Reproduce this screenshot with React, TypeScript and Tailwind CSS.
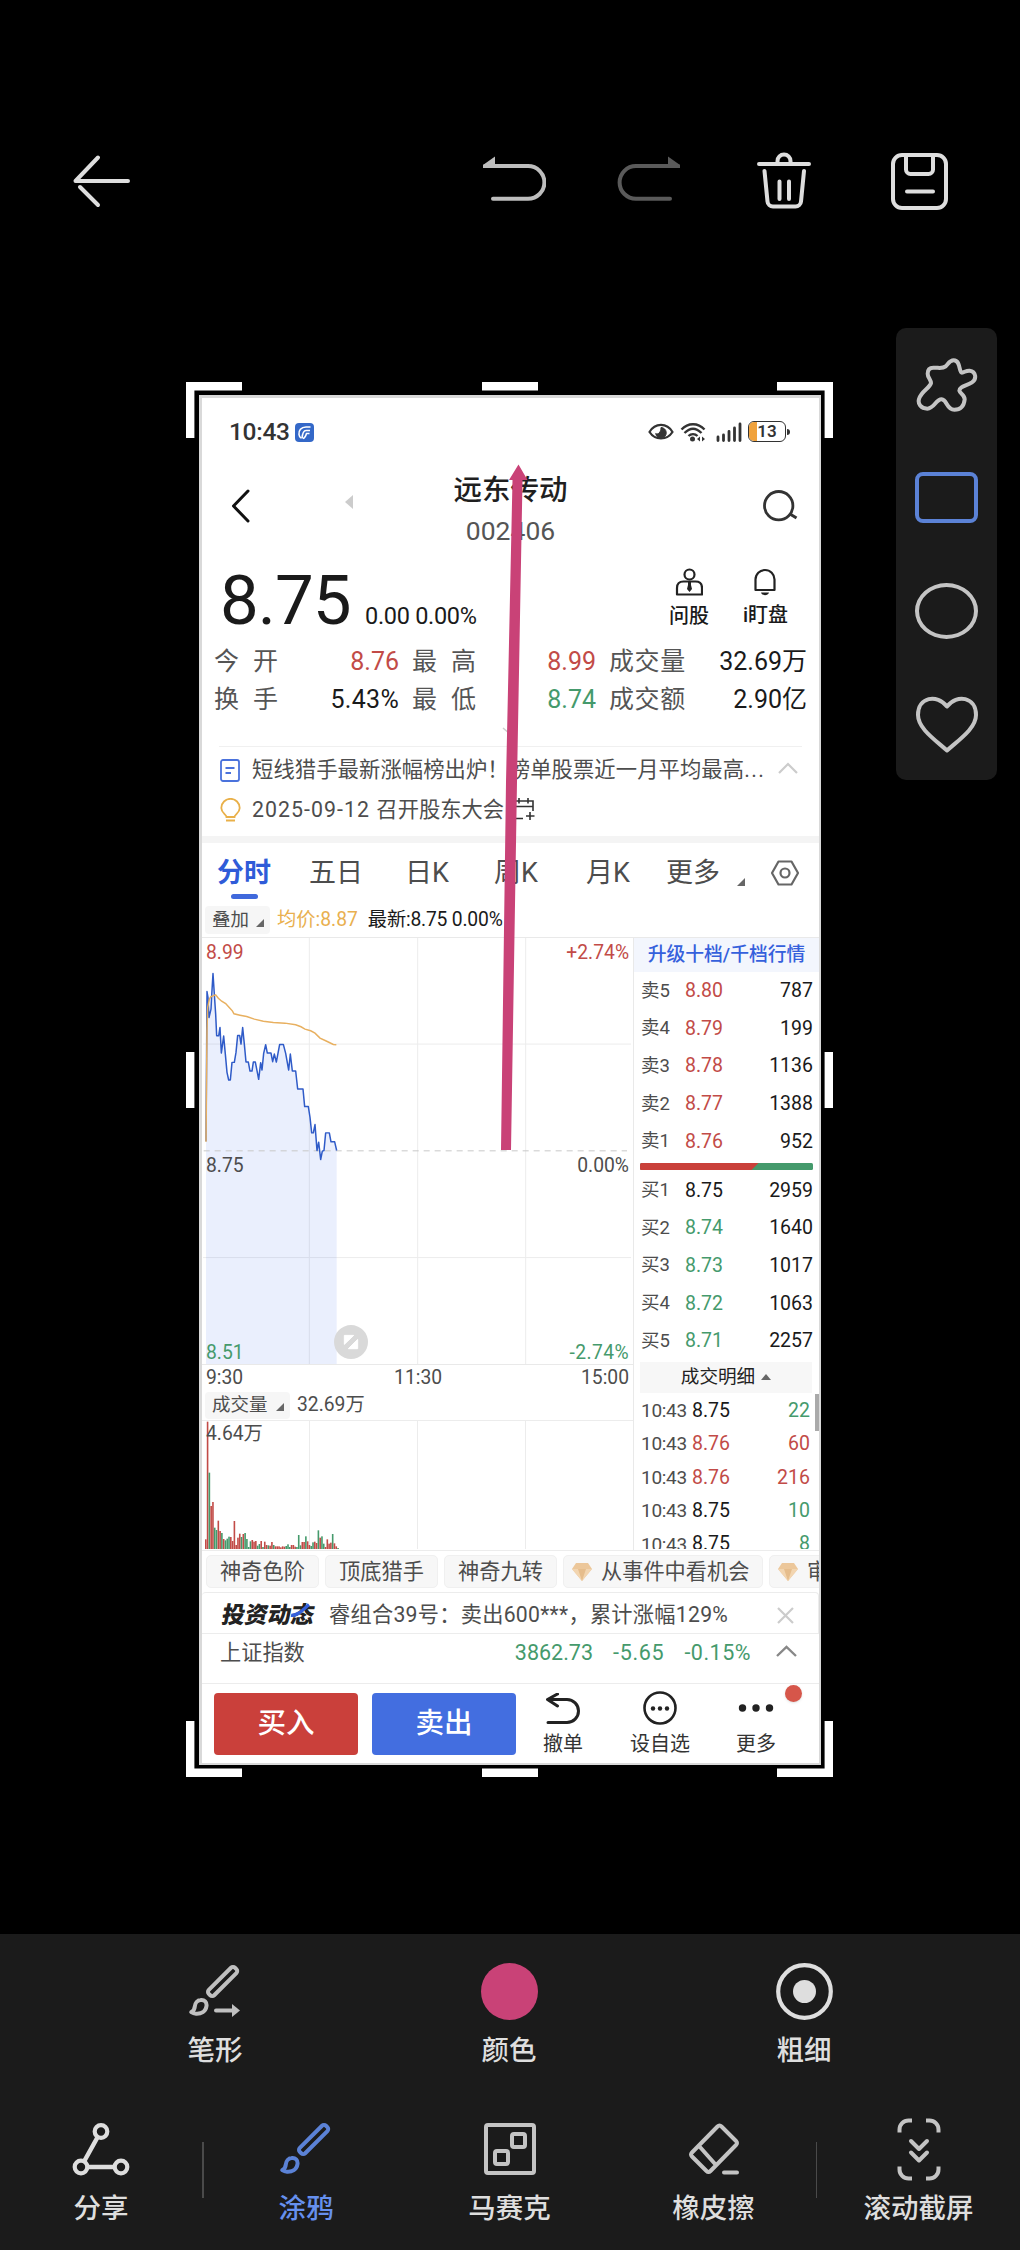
import type { ReactNode } from "react";

const sells = [
  ["卖5", "8.80", "787"],
  ["卖4", "8.79", "199"],
  ["卖3", "8.78", "1136"],
  ["卖2", "8.77", "1388"],
  ["卖1", "8.76", "952"],
];

const buys = [
  ["买1", "8.75", "2959"],
  ["买2", "8.74", "1640"],
  ["买3", "8.73", "1017"],
  ["买4", "8.72", "1063"],
  ["买5", "8.71", "2257"],
];

const trades = [
  { price: "8.75", qty: "22", up: false },
  { price: "8.76", qty: "60", up: true },
  { price: "8.76", qty: "216", up: true },
  { price: "8.75", qty: "10", up: false },
  { price: "8.75", qty: "8", up: false },
];

const priceLine =
  "33,632 36,182 39,200 42,260 48,235 50,195 54,128 58,190 62,250 65,315 71,315 75,290 79,367 86,316 91,370 96,425 101,448 106,448 111,395 118,395 123,365 128,314 134,314 138,340 143,290 148,340 153,394 160,394 165,421 171,421 175,394 181,394 186,420 191,446 197,396 201,418 206,368 212,342 217,367 228,367 233,393 238,370 244,394 254,341 265,341 272,368 281,418 286,370 292,421 302,421 308,475 324,475 329,528 340,528 345,560 350,607 355,607 360,582 366,660 371,635 377,687 382,662 387,660 392,607 403,607 408,634 419,634 425,660";

const avgLine =
  "33,634 36,300 38,230 43,205 47,198 62,192 70,202 80,211 92,218 102,229 112,240 117,249 135,253 155,257 178,265 205,271 235,275 270,277 302,282 318,288 330,295 347,300 360,307 375,322 392,330 415,341 424,342";

// one entry per minute: height in thirds of a pixel, negative = green
const volumes = [
  29, 382, -229, 129, 141, -64, -57, 85, 54, -48, 30, -26, -31, -37, 36, 24, 84, 12, 34, 46, -36, 45,
  -48, -30, -6, -23, 27, 22, 24, -10, -15, 24, -6, 22, 12, -11, 10, 21, -12, 8, 8, 8, 5, 8, 7, -9, -14,
  -6, 12, 12, 7, -6, -42, -11, 21, 21, -38, 23, 12, -9, -20, 22, 18, -56, 34, -38, -16, 6, 29, 16, 19,
  -45, 17, 8, -3,
];

function Svg({ w, h, box, className = "", children }: { w: number; h: number; box?: string; className?: string; children: ReactNode }) {
  return (
    <svg width={w} height={h} viewBox={box ?? `0 0 ${w} ${h}`} fill="none" className={`shrink-0 ${className}`}>
      {children}
    </svg>
  );
}

function Corner() {
  return (
    <Svg w={8} h={8}>
      <path d="M8 0V8H0Z" fill="#666" />
    </Svg>
  );
}

function Brush({ arrow = false }: { arrow?: boolean }) {
  return (
    <Svg w={52} h={54}>
      <rect x="-18.5" y="-3.8" width="37" height="7.6" rx="2.8" transform="translate(33.6 17.5) rotate(-45)" stroke="currentColor" strokeWidth="4" />
      <path
        d="M11.5 36c4-.5 6.500 2 6 6-.7 5.500-5.500 8-10.500 7.700-2-.1-3.500-.7-4.700-1.500 2.700-1.200 3.200-2.700 3.500-5.700.3-3.500 2.700-6.200 5.700-6.500z"
        stroke="currentColor"
        strokeWidth="4"
        strokeLinejoin="round"
      />
      {arrow && (
        <>
          <path d="M27 46.500H43" stroke="currentColor" strokeWidth="4" strokeLinecap="round" />
          <path d="M43 40L51 46.500L43 53Z" fill="currentColor" />
        </>
      )}
    </Svg>
  );
}

function TopBar() {
  return (
    <header className="flex h-[328px] items-start pt-[149px] pl-[71px] text-[#dedede]">
      <Svg w={60} h={60}>
        <path d="M57 32H4.500L27 8.500M9 38L27 56" stroke="currentColor" strokeWidth="4" strokeLinecap="round" strokeLinejoin="round" />
      </Svg>
      <Svg w={64} h={60} className="ml-[351px] text-[#bdbdbd]">
        <path d="M3 17H46a16.400 16.400 0 0 1 0 32.800H11" stroke="currentColor" strokeWidth="4" strokeLinecap="round" />
        <path d="M1 19V16L13 7.500V19Z" fill="currentColor" />
      </Svg>
      <Svg w={64} h={60} className="ml-[71px] text-[#5a5a5a]">
        <path d="M61 17H19a16.400 16.400 0 0 0 0 32.800H53" stroke="currentColor" strokeWidth="4" strokeLinecap="round" />
        <path d="M63 19V16L51 7.500V19Z" fill="currentColor" />
      </Svg>
      <Svg w={56} h={62} className="ml-[75px]">
        <path d="M3 15H53M21.500 15V12a6.500 6.500 0 0 1 13 0V15M8.500 22L11.500 52.500a5.500 5.500 0 0 0 5.500 5H39.500a5.500 5.500 0 0 0 5.500-5L48 22M23.500 32.500V50M33 32.500V50" stroke="currentColor" strokeWidth="4" strokeLinecap="round" />
      </Svg>
      <Svg w={58} h={58} className="ml-[78px] mt-[3px]">
        <rect x="3" y="3" width="53" height="53" rx="9" stroke="currentColor" strokeWidth="4" />
        <path d="M16 4V17.500a4.500 4.500 0 0 0 4.500 4.500H38.500a4.500 4.500 0 0 0 4.500-4.500V4M17 39.500H43" stroke="currentColor" strokeWidth="4" strokeLinecap="round" />
      </Svg>
    </header>
  );
}

function StatusBar() {
  return (
    <div className="flex h-[69px] items-center pl-[27px] pr-[29px] text-[#333]">
      <span className="w-[61px] text-[24.5px] font-medium tracking-[-0.3px]">10:43</span>
      <Svg w={19} h={19} className="ml-[5px]">
        <rect width="19" height="19" rx="4" fill="#3468c8" />
        <path d="M15.500 4H11C6 4 3.500 7.500 4 11.500c.2 1.700 1 3 2 3.500M15 7.500H11C8.500 7.500 7.500 9.500 7 15.500M14.500 10.500H11.500C10.500 14 10 15 8 15.500" stroke="#fff" strokeWidth="1.600" />
      </Svg>
      <div className="ml-auto flex items-center">
        <Svg w={26} h={20} className="mt-[-2px]">
          <path d="M1.500 10C7 .5 19 .5 24.500 10C19 18.500 7 18.500 1.500 10Z" stroke="#333" strokeWidth="2.200" />
          <path d="M13 5.500a5.300 5.300 0 1 1-5.300 6c2 1.500 5.500-1 5.300-6z" fill="#333" stroke="#333" />
        </Svg>
        <Svg w={26} h={20} className="ml-[6px] mt-[-2px]">
          <path d="M1.500 7.500C8 .5 18 .5 24.500 7.500M4.500 11C10 5.500 16 5.500 21.500 11M8.500 14C11 11.500 15 11.500 17.500 14" stroke="#333" strokeWidth="2.400" />
          <circle cx="12.500" cy="17" r="2.500" fill="#333" />
          <path d="M17 17L20 14.500V19.500ZM25 17L22 14.500V19.500Z" fill="#333" />
        </Svg>
        <Svg w={26} h={20} className="ml-[10px] mt-[-2px]">
          <path d="M2 15V18.500M7.500 13V18.500M13 9.500V18.500M18.500 6V18.500M24 2V18.500" stroke="#333" strokeWidth="2.800" strokeLinecap="round" />
        </Svg>
        <div className="relative ml-[6px] mt-[-2px] h-[21px] w-[38px] overflow-hidden rounded-[6px] border-[1.5px] border-[#333] text-center text-[17px] font-semibold leading-[19px]">
          <span className="absolute inset-y-0 left-0 w-[8px] bg-[#f0a23c]" />
          <span className="relative">13</span>
        </div>
        <span className="ml-px mt-[-2px] h-[6px] w-[3px] rounded-r-full bg-[#333]" />
      </div>
    </div>
  );
}

function StockHeader() {
  return (
    <div className="flex h-[86px] items-start">
      <Svg w={22} h={38} className="ml-[28px] mt-[20px]">
        <path d="M18 4L3.500 19L18 34" stroke="#111" strokeWidth="3" strokeLinecap="round" strokeLinejoin="round" />
      </Svg>
      <Svg w={8} h={14} className="ml-[93px] mt-[28px]">
        <path d="M8 0V14L0 7Z" fill="#ccc" />
      </Svg>
      <div className="ml-[100px] w-[115px] pt-[2px] text-center">
        <h1 className="whitespace-nowrap text-[28.5px] font-medium leading-[44px] text-[#1f1f1f]">远东传动</h1>
        <p className="text-[26.5px] leading-[36px] text-[#555]">002406</p>
      </div>
      <Svg w={36} h={34} className="ml-[194px] mt-[23px]">
        <circle cx="16.700" cy="15.700" r="14.200" stroke="#333" strokeWidth="2.800" />
        <path d="M28 24L34.500 28" stroke="#333" strokeWidth="3" />
      </Svg>
    </div>
  );
}

function PriceRow() {
  return (
    <div className="flex h-[89px] items-start text-[#1a1a1a]">
      <span className="ml-[18px] mt-[13px] w-[132px] text-[69px] leading-[70px] tracking-[-1px]">8.75</span>
      <span className="ml-[13px] mt-[51px] whitespace-nowrap text-[23.5px] leading-[24px] tracking-[-0.3px]">0.00 0.00%</span>
      <div className="ml-auto mr-[31px] flex gap-[34px] text-[20px] font-medium leading-[22px]">
        <div className="flex flex-col items-center pt-[15px]">
          <Svg w={28} h={28}>
            <circle cx="14.500" cy="6.500" r="5" stroke="#222" strokeWidth="2.200" />
            <path d="M2 26.500V20c0-4 2.500-6.500 6.500-6.500H20.500c4 0 6.500 2.500 6.500 6.500V26.500Z" stroke="#222" strokeWidth="2.200" strokeLinejoin="round" />
            <path d="M13 14h3v3l1 4-2.500 3-2.500-3 1-4z" fill="#222" />
          </Svg>
          <span className="mt-[9px]">问股</span>
        </div>
        <div className="flex flex-col items-center pt-[15px]">
          <Svg w={24} h={28}>
            <path d="M2.500 22V11.500a9.500 9.500 0 0 1 19 0V22Z" stroke="#222" strokeWidth="2.200" strokeLinejoin="round" />
            <path d="M8 24.500H16C15 28 9 28 8 24.500Z" fill="#222" />
          </Svg>
          <span className="mt-[8px]">i盯盘</span>
        </div>
      </div>
    </div>
  );
}

function Stats() {
  return (
    <div className="pl-[12px] pr-[12px] pt-px text-[25px] leading-[38px] text-[#1a1a1a]">
      <div className="flex h-[38px] whitespace-nowrap">
        <span className="w-[64px] tracking-[14px] text-[#555]">今开</span>
        <span className="w-[121px] text-right text-[#c24b47]">8.76</span>
        <span className="ml-[13px] w-[78px] tracking-[14px] text-[#555]">最高</span>
        <span className="w-[106px] text-right text-[#c24b47]">8.99</span>
        <span className="ml-[13px] tracking-[0.6px] text-[#555]">成交量</span>
        <span className="ml-auto">32.69万</span>
      </div>
      <div className="flex h-[38px] whitespace-nowrap">
        <span className="w-[64px] tracking-[14px] text-[#555]">换手</span>
        <span className="w-[121px] text-right tracking-[0.3px]">5.43%</span>
        <span className="ml-[13px] w-[78px] tracking-[14px] text-[#555]">最低</span>
        <span className="w-[106px] text-right text-[#459a6c]">8.74</span>
        <span className="ml-[13px] tracking-[0.6px] text-[#555]">成交额</span>
        <span className="ml-auto">2.90亿</span>
      </div>
      <div className="flex h-[27px] items-center justify-center pr-[2px] pb-[3px]">
        <Svg w={16} h={8}>
          <path d="M1 1L8 7L15 1" stroke="#ccc" strokeWidth="1.500" />
        </Svg>
      </div>
    </div>
  );
}

function News() {
  return (
    <div className="h-[90px] text-[21.3px] text-[#4d4d4d]">
      <div className="mx-[17px] h-px bg-[#f0f0f0]" />
      <div className="mt-[3px] flex h-[40px] items-center pl-[18px] pr-[21px]">
        <Svg w={20} h={23}>
          <rect x="1" y="1" width="18" height="21" rx="2" stroke="#4a72dc" strokeWidth="1.800" />
          <path d="M5.500 9H14.500M5.500 14H11" stroke="#4a72dc" strokeWidth="1.800" />
        </Svg>
        <span className="ml-[12px] whitespace-nowrap tracking-[0.1px]">
          短线猎手最新涨幅榜出炉！榜单股票近一月平均最高<span className="tracking-[1.4px]">...</span>
        </span>
        <Svg w={20} h={12} className="ml-auto mt-[-4px]">
          <path d="M1 11L10 2L19 11" stroke="#ccc" strokeWidth="2.200" />
        </Svg>
      </div>
      <div className="flex h-[40px] items-center pl-[18px]">
        <Svg w={21} h={24}>
          <path d="M6.500 19C6.500 16.500 1.300 15 1.300 10a9.200 9.200 0 0 1 18.400 0c0 5-5.200 6.500-5.200 9Z" stroke="#e9b049" strokeWidth="1.800" />
          <path d="M6 22.500H15" stroke="#e9b049" strokeWidth="2" />
        </Svg>
        <span className="ml-[11px] whitespace-nowrap">
          <span className="tracking-[1.05px]">2025-09-12 </span>召开股东大会
        </span>
        <Svg w={24} h={24} className="ml-[8px] mt-[-2px]">
          <path d="M2 4H21V14M2 9.500H21M2 4V21.500H11M7 1V6.500M16 1V6.500M18 15V23M14 19H22.500" stroke="#333" strokeWidth="1.600" />
        </Svg>
      </div>
    </div>
  );
}

function ChartTabs() {
  return (
    <div className="flex h-[60px] items-center whitespace-nowrap text-[27px] text-[#4d4d4d]">
      <div className="relative ml-[15px] w-[54px] font-bold text-[#2f5bd8]">
        分时
        <span className="absolute left-[14px] top-[34px] h-[5px] w-[27px] rounded-sm bg-[#4069dc]" />
      </div>
      <span className="ml-[38px] w-[54px]">五日</span>
      <span className="ml-[42px] w-[47px]">日K</span>
      <span className="ml-[42px] w-[47px]">周K</span>
      <span className="ml-[45px] w-[47px]">月K</span>
      <span className="ml-[33px] w-[54px]">更多</span>
      <div className="ml-[17px] mt-[18px]">
        <Corner />
      </div>
      <Svg w={28} h={26} className="ml-[26px]">
        <path d="M7.500 1.500H20.500L27 13L20.500 24.500H7.500L1 13Z" stroke="#666" strokeWidth="2.200" strokeLinejoin="round" />
        <circle cx="14" cy="13" r="4.500" stroke="#666" strokeWidth="2.200" />
      </Svg>
    </div>
  );
}

function MinuteChart() {
  return (
    <div className="w-[432px] border-r border-[#e9e9e9] text-[19.3px] leading-[24px] text-[#4d4d4d]">
      <div className="relative h-[428px] border-y border-[#e9e9e9]">
        <svg viewBox="24 21 1284 1281" className="ml-px h-[426px] w-[428px]" fill="none" preserveAspectRatio="none">
          <path d="M343 21V1302M668 21V1302M992 21V1302M24 340H1308M24 982H1308" stroke="#ececec" strokeWidth="3" />
          <polygon points={`33,1302 ${priceLine} 425,1302`} fill="#3560f0" fillOpacity="0.1" />
          <path d="M26 661H1296" stroke="#c8c8c8" strokeWidth="3" strokeDasharray="18 15" />
          <polyline points={priceLine} stroke="#2f5bc8" strokeWidth="4.500" strokeLinejoin="round" />
          <polyline points={avgLine} stroke="#e8b060" strokeWidth="4.500" />
          <circle cx="468" cy="1236" r="51" fill="#d9d9d9" />
          <path d="M448 1216H476L448 1243ZM488 1228V1256H460Z" fill="#fff" stroke="#fff" strokeWidth="3" />
        </svg>
        <div className="absolute inset-0 flex flex-col pl-[4px] pr-[4px]">
          <div className="mt-[3px] flex justify-between text-[#c24b47]">
            <span>8.99</span>
            <span>+2.74%</span>
          </div>
          <div className="mt-[189px] flex justify-between">
            <span>8.75</span>
            <span>0.00%</span>
          </div>
          <div className="mt-[163px] flex justify-between text-[#459a6c]">
            <span>8.51</span>
            <span className="tracking-[0.4px]">-2.74%</span>
          </div>
        </div>
      </div>
      <div className="flex h-[25px] items-center justify-between px-[4px]">
        <span>9:30</span>
        <span className="pl-[12px]">11:30</span>
        <span>15:00</span>
      </div>
      <div className="flex h-[31px] items-center border-b border-[#ececec] pl-[3px]">
        <div className="flex h-[27px] w-[85px] items-center rounded-[4px] bg-[#f6f6f6] pl-[7px] text-[18.5px]">
          成交量
          <div className="ml-[8px] mt-[4px]">
            <Corner />
          </div>
        </div>
        <span className="ml-[7px]">32.69万</span>
      </div>
      <div className="relative h-[128px]">
        <svg viewBox="0 0 430 128" className="h-[128px] w-[430px]">
          <path d="M107.500 0V128M215.500 0V128M323.500 0V128" stroke="#ececec" />
          {volumes.map((v, i) => (
            <rect key={i} x={3 + i * 1.787} y={128 - Math.abs(v) / 3} width="1.6" height={Math.abs(v) / 3} fill={v > 0 ? "#c24b47" : "#459a6c"} />
          ))}
        </svg>
        <span className="absolute left-[4px] top-[1px]">4.64万</span>
      </div>
    </div>
  );
}

function QuoteRow({ row, color }: { row: string[]; color: string }) {
  return (
    <div className="flex h-[37.7px] items-center text-[19.5px] text-[#1a1a1a]">
      <span className="w-[44px] text-[18.5px] text-[#4d4d4d]">{row[0]}</span>
      <span className={color}>{row[1]}</span>
      <span className="ml-auto">{row[2]}</span>
    </div>
  );
}

function OrderBook() {
  return (
    <div className="relative w-[185px] border-t border-[#e9e9e9]">
      <div className="h-[34px] bg-[#f3f6fd] text-center text-[18.8px] font-medium leading-[35px] text-[#3560dc]">升级十档/千档行情</div>
      <div className="pl-[7px] pr-[6px]">
        {sells.map((r) => (
          <QuoteRow key={r[0]} row={r} color="text-[#c24b47]" />
        ))}
        <svg viewBox="0 0 173 7" className="mt-[3px] mb-px ml-[-1px] h-[7px] w-[173px]">
          <rect width="173" height="7" rx="1.500" fill="#459a6c" />
          <path d="M1.500 0H118.500L111.500 7H1.500Q0 7 0 5.500V1.500Q0 0 1.500 0Z" fill="#c9403a" />
        </svg>
        {buys.map((r, i) => (
          <QuoteRow key={r[0]} row={r} color={i === 0 ? "text-[#1a1a1a]" : "text-[#459a6c]"} />
        ))}
        <div className="ml-[-1px] mt-[2px] flex h-[31px] w-[172px] items-center justify-center gap-[6px] bg-[#f7f7f7] text-[18.6px] text-[#222]">
          成交明细
          <Svg w={10} h={6}>
            <path d="M0 6L5 0L10 6Z" fill="#666" />
          </Svg>
        </div>
      </div>
      <div className="h-[156px] overflow-hidden pl-[7px] pr-[9px] pt-[1px] text-[19.5px]">
        {trades.map((t, i) => (
          <div key={i} className="flex h-[33.4px] items-center text-[#1a1a1a]">
            <span className="w-[51px] text-[19px] tracking-[-0.3px] text-[#4d4d4d]">10:43</span>
            <span className={t.price === "8.76" ? "text-[#c24b47]" : ""}>{t.price}</span>
            <span className={`ml-auto ${t.up ? "text-[#c24b47]" : "text-[#459a6c]"}`}>{t.qty}</span>
          </div>
        ))}
      </div>
      <span className="absolute bottom-[119px] right-0 h-[37px] w-[4px] bg-[#aaa]" />
    </div>
  );
}

function Gem() {
  return (
    <Svg w={20} h={18} className="mr-[9px]">
      <path d="M4 0H16L20 6L10 18L0 6Z" fill="#ecc79a" />
      <path d="M0 6H20L10 18Z" fill="#f2d5b0" />
      <path d="M6 6H14L10 18Z" fill="#e6bd8c" />
    </Svg>
  );
}

function ToolChips() {
  const chip = "flex h-[33px] shrink-0 items-center whitespace-nowrap rounded-[5px] border border-[#f0f0f0] bg-[#f7f7f7]";
  return (
    <div className="flex h-[42px] items-start gap-[6px] overflow-hidden border-t border-[#ececec] pl-[4px] pt-[4px] text-[21.2px] text-[#4d4d4d]">
      <div className={`${chip} w-[113px] justify-center`}>神奇色阶</div>
      <div className={`${chip} w-[113px] justify-center`}>顶底猎手</div>
      <div className={`${chip} w-[113px] justify-center`}>神奇九转</div>
      <div className={`${chip} w-[200px] pl-[8px]`}>
        <Gem />
        从事件中看机会
      </div>
      <div className={`${chip} pl-[8px]`}>
        <Gem />
        审
      </div>
    </div>
  );
}

function Ticker() {
  return (
    <div className="text-[21.2px] text-[#4d4d4d]">
      <div className="flex h-[41px] items-center rounded-t-[4px] border-t border-r border-[#ececec] pb-px pl-[20px] pr-[24px] pt-[5px]">
        <div className="relative mr-[14px] w-[93px] skew-x-[-10deg] whitespace-nowrap text-[23px] font-black text-[#222]">
          投资动态
          <svg viewBox="0 0 18 14" className="absolute right-[7px] top-[-1px] h-[14px] w-[18px]" fill="none">
            <path d="M1 12.500C8 12.500 12 7 17 1.500" stroke="#3560dc" strokeWidth="3.500" />
          </svg>
        </div>
        <span className="whitespace-nowrap tracking-[0.28px]">睿组合39号：卖出600***，累计涨幅129%</span>
        <Svg w={17} h={17} className="ml-auto">
          <path d="M1 1L16 16M16 1L1 16" stroke="#ccc" strokeWidth="2.200" />
        </Svg>
      </div>
      <div className="flex h-[50px] items-center whitespace-nowrap border-t border-[#ececec] pb-[12px] pl-[18px] pr-[22px]">
        <span>上证指数</span>
        <div className="ml-auto flex gap-[20px] text-[21.5px] text-[#459a6c]">
          <span>3862.73</span>
          <span className="tracking-[0.7px]">-5.65</span>
          <span className="tracking-[0.5px]">-0.15%</span>
        </div>
        <Svg w={21} h={12} className="ml-[25px] mt-[-3px]">
          <path d="M1 11L10.500 2L20 11" stroke="#888" strokeWidth="2.400" />
        </Svg>
      </div>
    </div>
  );
}

function TradeBar() {
  return (
    <div className="relative flex h-[81px] items-start border-t border-[#ececec] pl-[12px] pt-[9px] text-[20px] text-[#333]">
      <button className="h-[62px] w-[144px] rounded-[4px] bg-[#ca403b] text-[28.5px] font-medium text-white">买入</button>
      <button className="ml-[14px] h-[62px] w-[144px] rounded-[4px] bg-[#436ee0] text-[28.5px] font-medium text-white">卖出</button>
      <div className="ml-[26px] flex w-[42px] flex-col items-center">
        <Svg w={36} h={32}>
          <path d="M3 29.500H22a11.500 11.500 0 0 0 0-23H4M12.500 1L2.500 6.500L12.500 13" stroke="#222" strokeWidth="3" strokeLinecap="round" strokeLinejoin="round" />
        </Svg>
        <span className="mt-[7px] whitespace-nowrap leading-[24px]">撤单</span>
      </div>
      <div className="ml-[45px] flex w-[62px] flex-col items-center">
        <Svg w={34} h={34} className="mt-[-2px]">
          <circle cx="17" cy="17" r="15.500" stroke="#222" strokeWidth="2.600" />
          <circle cx="10" cy="17.500" r="2.200" fill="#222" />
          <circle cx="17" cy="17.500" r="2.200" fill="#222" />
          <circle cx="24" cy="17.500" r="2.200" fill="#222" />
        </Svg>
        <span className="mt-[7px] whitespace-nowrap leading-[24px]">设自选</span>
      </div>
      <div className="ml-[44px] flex w-[42px] flex-col items-center">
        <Svg w={36} h={32}>
          <circle cx="4.500" cy="15" r="3.700" fill="#222" />
          <circle cx="18" cy="15" r="3.700" fill="#222" />
          <circle cx="31.500" cy="15" r="3.700" fill="#222" />
        </Svg>
        <span className="mt-[7px] whitespace-nowrap leading-[24px]">更多</span>
      </div>
      <span className="absolute right-[17px] top-[1px] size-[17px] rounded-full bg-[#d6564a] shadow" />
    </div>
  );
}

function PhoneShot() {
  return (
    <div className="relative mt-[54px] h-[1395px] w-[647px] pl-[13px] pt-[13px]">
      <div className="h-[1370px] w-[622px] overflow-hidden border-t-[3px] border-r-2 border-b-2 border-l-[3px] border-[#d9d9d9] bg-white">
        <StatusBar />
        <StockHeader />
        <PriceRow />
        <Stats />
        <News />
        <div className="h-[7px] bg-[#f4f4f4]" />
        <ChartTabs />
        <div className="flex h-[34px] items-center whitespace-nowrap pl-[3px] text-[19.3px]">
          <div className="flex h-[28px] w-[65px] items-center rounded-[4px] bg-[#f6f6f6] pl-[7px] text-[18.5px] text-[#4d4d4d]">
            叠加
            <div className="ml-[7px] mt-[5px]">
              <Corner />
            </div>
          </div>
          <span className="ml-[7px] text-[#e9b04f]">均价:8.87</span>
          <span className="ml-[10px] tracking-[-0.2px] text-[#1a1a1a]">最新:8.75 0.00%</span>
        </div>
        <div className="flex h-[613px]">
          <MinuteChart />
          <OrderBook />
        </div>
        <ToolChips />
        <Ticker />
        <TradeBar />
      </div>
      {/* crop handles and the drawn arrow */}
      <svg viewBox="0 0 647 1395" className="absolute inset-0 h-[1395px] w-[647px]" fill="none">
        <path
          d="M4.200 56V4.200H56M591 4.200H642.800V56M4.200 1339V1390.800H56M591 1390.800H642.800V1339M296 4.200H352M296 1390.800H352M4.200 670V726M642.800 670V726"
          stroke="#fff"
          strokeWidth="8.400"
        />
        <path d="M332.500 82.500L341.500 98H336.500L331 400L325 768H315L320 400L326.500 98H323Z" fill="#c94277" />
      </svg>
    </div>
  );
}

function ShapePanel() {
  return (
    <aside className="ml-[63px] flex h-[452px] w-[101px] flex-col rounded-[10px] bg-[#1b1b1b] text-[#c4c4c4]">
      <div className="flex h-[113px] items-center justify-center">
        <Svg w={62} h={56} box="108 110 186 168">
          <path
            d="M221 120C243 120 236 158 246 157C254 155 260 150 269 151C288 153 291 176 276 186C260 197 238 198 238 211C240 220 254 222 254 237C252 258 240 268 223 268C199 268 202 238 185 237C168 236 163 265 142 265C122 265 113 250 117 236C124 212 150 203 153 188C153 178 143 172 143 160C143 147 149 142 160 142C178 142 187 146 197 138C205 130 209 120 221 120Z"
            stroke="currentColor"
            strokeWidth="12"
            strokeLinejoin="round"
          />
        </Svg>
      </div>
      <div className="flex h-[113px] items-center justify-center">
        <div className="h-[51px] w-[63px] rounded-[8px] border-4 border-[#5b82d6]" />
      </div>
      <div className="flex h-[113px] items-center justify-center">
        <div className="h-[56px] w-[63px] rounded-[50%] border-4 border-[#c4c4c4]" />
      </div>
      <div className="flex h-[113px] items-center justify-center">
        <Svg w={64} h={58}>
          <path d="M32 11.500C22-1.500 3 2 3 20C3 33 19 44 32 55.500C45 44 61 33 61 20C61 2 42-1.500 32 11.500Z" stroke="currentColor" strokeWidth="4" strokeLinejoin="round" />
        </Svg>
      </div>
    </aside>
  );
}

function Tool({ label, className, children }: { label: string; className: string; children: ReactNode }) {
  return (
    <div className={`flex flex-col items-center ${className}`}>
      <div className="flex h-[64px] items-center">{children}</div>
      <span className="mt-[12px] whitespace-nowrap text-[27.5px] font-medium leading-[32px]">{label}</span>
    </div>
  );
}

function BottomBar() {
  return (
    <footer className="h-[316px] bg-[#1b1b1b] pt-[25px] text-[#dedede]">
      <div className="flex pl-[160px]">
        <Tool label="笔形" className="w-[110px]">
          <span className="text-[#c0c0c0]">
            <Brush arrow />
          </span>
        </Tool>
        <Tool label="颜色" className="ml-[184px] w-[110px]">
          <div className="size-[57px] rounded-full bg-[#c94277]" />
        </Tool>
        <Tool label="粗细" className="ml-[185px] w-[110px]">
          <Svg w={57} h={57}>
            <circle cx="28.500" cy="28.500" r="26.300" stroke="currentColor" strokeWidth="4.200" />
            <circle cx="28.500" cy="28.500" r="11.500" fill="currentColor" />
          </Svg>
        </Tool>
      </div>
      <div className="mt-[50px] flex items-start">
        <Tool label="分享" className="w-[202px]">
          <Svg w={58} h={54}>
            <path d="M9 45L29 9M9 45H48" stroke="currentColor" strokeWidth="4.500" />
            <circle cx="29" cy="9.500" r="6.300" fill="#1b1b1b" stroke="currentColor" strokeWidth="4.200" />
            <circle cx="9" cy="45" r="6.300" fill="#1b1b1b" stroke="currentColor" strokeWidth="4.200" />
            <circle cx="49" cy="45" r="6.300" fill="#1b1b1b" stroke="currentColor" strokeWidth="4.200" />
          </Svg>
        </Tool>
        <div className="mt-[25px] h-[56px] w-[2px] bg-[#4a4a4a]" />
        <Tool label="涂鸦" className="w-[204px] text-[#6690ee]">
          <span className="text-[#5b82d6]">
            <Brush />
          </span>
        </Tool>
        <Tool label="马赛克" className="w-[203px]">
          <Svg w={52} h={52} className="text-[#c4c4c4]">
            <rect x="2" y="2" width="48" height="48" rx="2" stroke="currentColor" strokeWidth="4" />
            <rect x="28" y="11" width="13" height="13" rx="2" stroke="currentColor" strokeWidth="4" />
            <rect x="11" y="28" width="13" height="13" rx="2" stroke="currentColor" strokeWidth="4" />
          </Svg>
        </Tool>
        <Tool label="橡皮擦" className="w-[205px]">
          <Svg w={52} h={52} className="text-[#c4c4c4]">
            <path d="M29.500 3.500Q31.500 1.500 33.500 3.500L48 18Q50 20 48 22L22.500 48Q20.500 50 18.500 48L4 33.500Q2 31.500 4 29.500ZM11.500 23.500L27.500 41.500M36 49.500H49" stroke="currentColor" strokeWidth="4" strokeLinecap="round" strokeLinejoin="round" />
          </Svg>
        </Tool>
        <div className="mt-[25px] h-[56px] w-px bg-[#4a4a4a]" />
        <Tool label="滚动截屏" className="w-[203px]">
          <Svg w={44} h={64} className="text-[#c4c4c4]">
            <path d="M2.500 15.500V12.500a9 9 0 0 1 9-9H15M29 3.500h3.500a9 9 0 0 1 9 9V15.500M2.500 49.500v3a9 9 0 0 0 9 9H15M29 61.500h3.500a9 9 0 0 0 9-9V49.500" stroke="currentColor" strokeWidth="4" />
            <path d="M14 24L22 32L30 24M14 35.500L22 43.500L30 35.500" stroke="currentColor" strokeWidth="4" strokeLinecap="round" strokeLinejoin="round" />
          </Svg>
        </Tool>
      </div>
    </footer>
  );
}

export default function App() {
  return (
    <main className="h-[2250px] w-[1020px] overflow-hidden bg-black font-[Roboto,'Noto_Sans_CJK_SC',sans-serif] leading-none">
      <TopBar />
      <div className="flex h-[1606px] items-start pl-[186px]">
        <PhoneShot />
        <ShapePanel />
      </div>
      <BottomBar />
    </main>
  );
}
